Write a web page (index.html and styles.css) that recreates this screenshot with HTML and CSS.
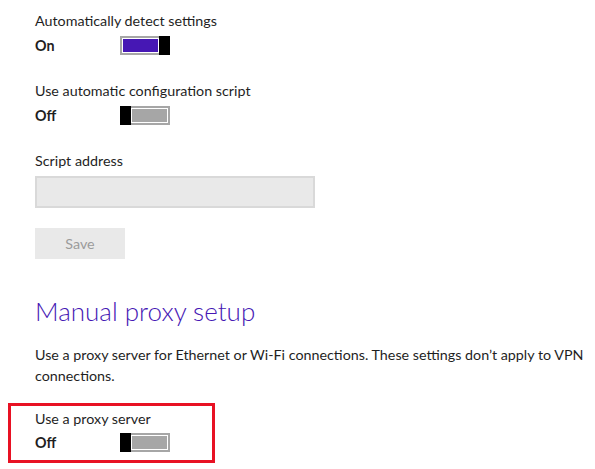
FILE: index.html
```html
<!DOCTYPE html>
<html lang="en">
<head>
    <meta charset="UTF-8">
    <title>Proxy</title>
    <link rel="stylesheet" href="styles.css">
</head>
<body>
    <div class="settings">
        <div class="setting">
            <div class="label">Automatically detect settings</div>
            <div class="state">
                <span class="state-text">On</span>
                <span class="toggle on"><span class="track"></span><span class="thumb"></span></span>
            </div>
        </div>

        <div class="setting">
            <div class="label">Use automatic configuration script</div>
            <div class="state">
                <span class="state-text">Off</span>
                <span class="toggle off"><span class="thumb"></span><span class="track"></span></span>
            </div>
        </div>

        <div class="setting">
            <div class="label">Script address</div>
            <div class="field"></div>
            <div class="save-button">Save</div>
        </div>

        <h1>Manual proxy setup</h1>
        <p class="description">Use a proxy server for Ethernet or Wi-Fi connections. These settings don’t apply to VPN connections.</p>

        <div class="setting highlighted">
            <div class="label">Use a proxy server</div>
            <div class="state">
                <span class="state-text">Off</span>
                <span class="toggle off"><span class="thumb"></span><span class="track"></span></span>
            </div>
        </div>
    </div>
</body>
</html>
```

FILE: styles.css
```css
body {
    margin: 0;
    padding: 0;
    background: #ffffff;
    color: #1f1f1f;
    font-family: Lato, 'Noto Sans', sans-serif;
    font-size: 14.3px;
}

.settings {
    padding: 11px 0 0 35px;
}

.setting {
    margin-bottom: 26px;
}

.label {
    line-height: 20px;
    height: 20px;
}

.state {
    display: flex;
    align-items: center;
    margin-top: 5px;
    height: 19px;
}

.state-text {
    font-weight: 700;
    width: 85px;
}

.toggle {
    display: flex;
    width: 50px;
    height: 19px;
}

.toggle .thumb {
    width: 11px;
    background: #000000;
}

.toggle .track {
    flex: 1;
    border: 2px solid #a6a6a6;
    box-shadow: inset 0 0 0 1px #ffffff;
}

.toggle.on .track {
    background: #4617b4;
    border-right: none;
}

.toggle.off .track {
    background: #a6a6a6;
    border-left: none;
}

.field {
    margin-top: 5px;
    width: 276px;
    height: 28px;
    background: #e9e9e9;
    border: 2px solid #d9d9d9;
}

.save-button {
    margin-top: 20px;
    width: 90px;
    height: 31px;
    line-height: 31px;
    text-align: center;
    background: #e9e9e9;
    color: #9b9b9b;
}

h1 {
    margin: 0;
    padding-top: 8px;
    font-size: 26px;
    font-weight: 300;
    line-height: 36px;
    color: #4617b4;
}

.description {
    margin: 15px 0 0;
    line-height: 21px;
    max-width: 556px;
}

.highlighted {
    margin: 17px 0 0 -27px;
    width: 177px;
    padding: 3px 0 8px 24px;
    border: 3px solid #e81123;
}

.highlighted .state {
    margin-top: 4px;
}
```
